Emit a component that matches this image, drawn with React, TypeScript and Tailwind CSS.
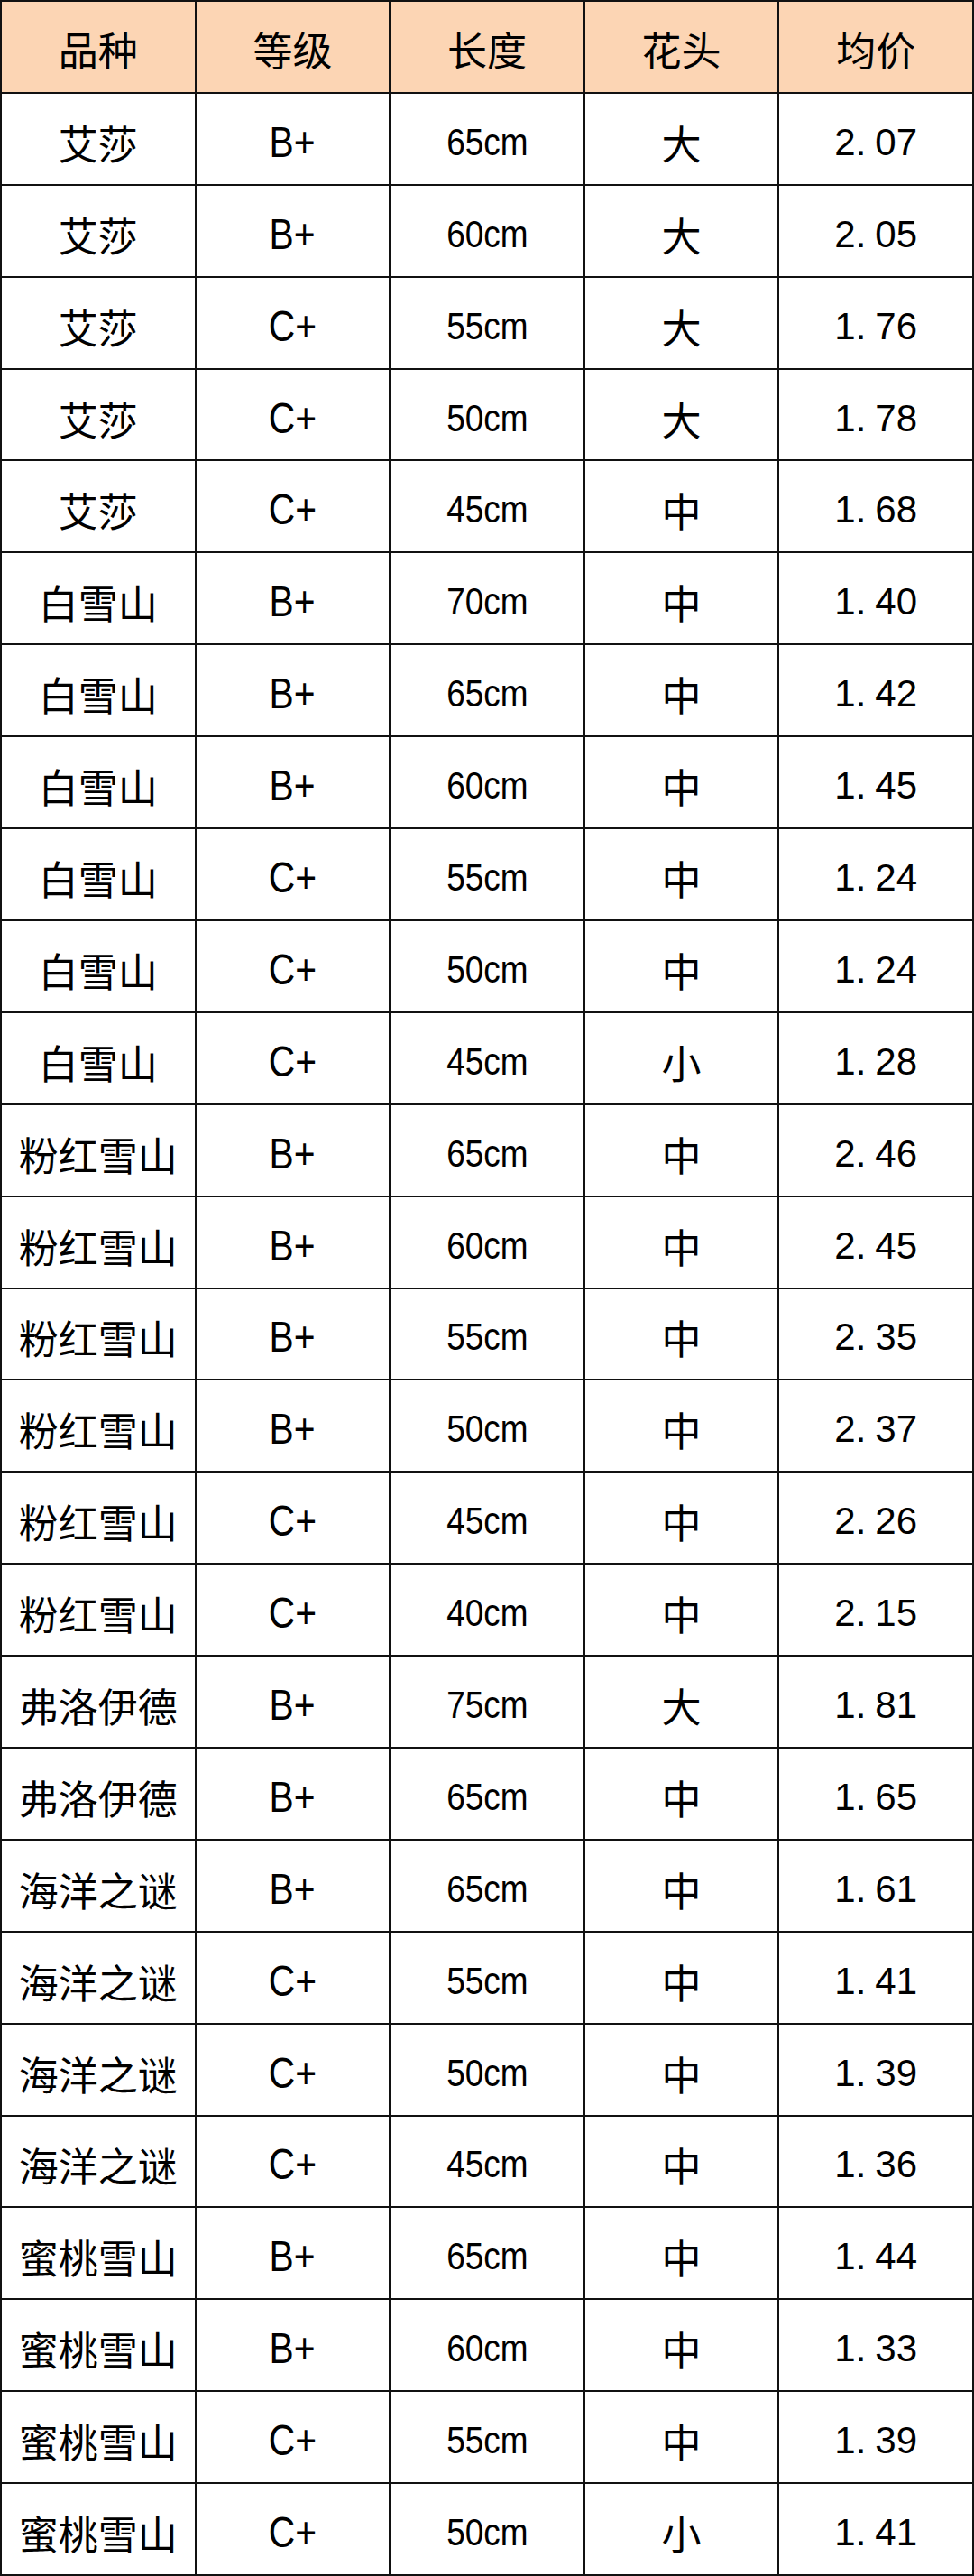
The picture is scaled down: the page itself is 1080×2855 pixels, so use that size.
const headers = ["品种", "等级", "长度", "花头", "均价"];

const rows: [string, string, string, string, string][] = [
  ["艾莎", "B+", "65cm", "大", "2.07"],
  ["艾莎", "B+", "60cm", "大", "2.05"],
  ["艾莎", "C+", "55cm", "大", "1.76"],
  ["艾莎", "C+", "50cm", "大", "1.78"],
  ["艾莎", "C+", "45cm", "中", "1.68"],
  ["白雪山", "B+", "70cm", "中", "1.40"],
  ["白雪山", "B+", "65cm", "中", "1.42"],
  ["白雪山", "B+", "60cm", "中", "1.45"],
  ["白雪山", "C+", "55cm", "中", "1.24"],
  ["白雪山", "C+", "50cm", "中", "1.24"],
  ["白雪山", "C+", "45cm", "小", "1.28"],
  ["粉红雪山", "B+", "65cm", "中", "2.46"],
  ["粉红雪山", "B+", "60cm", "中", "2.45"],
  ["粉红雪山", "B+", "55cm", "中", "2.35"],
  ["粉红雪山", "B+", "50cm", "中", "2.37"],
  ["粉红雪山", "C+", "45cm", "中", "2.26"],
  ["粉红雪山", "C+", "40cm", "中", "2.15"],
  ["弗洛伊德", "B+", "75cm", "大", "1.81"],
  ["弗洛伊德", "B+", "65cm", "中", "1.65"],
  ["海洋之谜", "B+", "65cm", "中", "1.61"],
  ["海洋之谜", "C+", "55cm", "中", "1.41"],
  ["海洋之谜", "C+", "50cm", "中", "1.39"],
  ["海洋之谜", "C+", "45cm", "中", "1.36"],
  ["蜜桃雪山", "B+", "65cm", "中", "1.44"],
  ["蜜桃雪山", "B+", "60cm", "中", "1.33"],
  ["蜜桃雪山", "C+", "55cm", "中", "1.39"],
  ["蜜桃雪山", "C+", "50cm", "小", "1.41"],
];

const cjk = "font-['Noto_Sans_CJK_SC',sans-serif] text-[44px] leading-none";
const latin = "font-['Liberation_Sans','Noto_Sans_CJK_SC',sans-serif] text-[42px] leading-none";

function Cell({ children, head }: { children: React.ReactNode; head?: boolean }) {
  return (
    <div
      className={`flex items-center justify-center border-r-2 border-b-2 border-[#111] text-black ${
        head ? "bg-[#fcd5b4] pt-1" : "bg-white pt-2"
      }`}
    >
      {children}
    </div>
  );
}

function Price({ value }: { value: string }) {
  const [a, b] = value.split(".");
  return (
    <span className={latin}>
      {a}.<span className="ml-[10px]">{b}</span>
    </span>
  );
}

export default function App() {
  return (
    <div className="w-[1080px] h-[2855px] bg-white">
      <div className="grid h-full grid-cols-5 grid-rows-[repeat(28,minmax(0,1fr))] border-l-2 border-t-2 border-[#111]">
        {headers.map((h) => (
          <Cell key={h} head>
            <span className={cjk}>{h}</span>
          </Cell>
        ))}
        {rows.map((r, i) => (
          <div key={i} className="contents">
            <Cell>
              <span className={cjk}>{r[0]}</span>
            </Cell>
            <Cell>
              <span className={`${latin} inline-block origin-center scale-x-[0.85] text-[48px]`}>{r[1]}</span>
            </Cell>
            <Cell>
              <span className={`${latin} inline-block origin-center scale-x-[0.88]`}>{r[2]}</span>
            </Cell>
            <Cell>
              <span className={cjk}>{r[3]}</span>
            </Cell>
            <Cell>
              <Price value={r[4]} />
            </Cell>
          </div>
        ))}
      </div>
    </div>
  );
}
